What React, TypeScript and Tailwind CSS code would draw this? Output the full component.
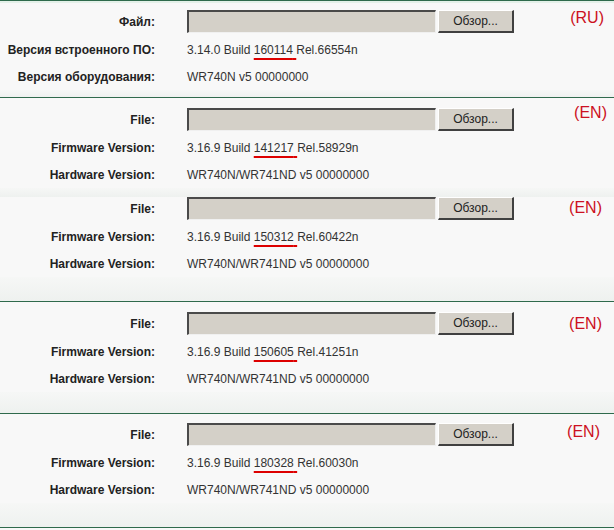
const FONT = { fontFamily: '"Liberation Sans", Arial, sans-serif' };

interface SectionProps {
  lang: string;
  labels: [string, string, string];
  version: string;
  build: string;
  rel: string;
  hardware: string;
  band: string;
  langPos: string;
  topLine?: boolean;
  bottomLine?: boolean;
  pt: string;
}

const Section = ({ lang, labels, version, build, rel, hardware, band, langPos, topLine, bottomLine, pt }: SectionProps) => (
  <div className="flex flex-col">
    {topLine && <div className="h-px bg-[#2f6a4c]" />}
    {topLine && <div className="h-[2px] bg-[#e4f1e9]" />}
    <div className={`relative flex flex-col ${pt}`}>
      <div className="flex h-[23px] items-center">
        <div className="w-[155px] pr-0 text-right text-[12px] font-bold text-[#222]">{labels[0]}</div>
        <div className="ml-[32px] flex h-[23px]">
          <div className="h-[23px] w-[249px] border-t-2 border-l-2 border-b border-r border-t-[#4a4a4a] border-l-[#4a4a4a] border-b-[#f0f0f0] border-r-[#f0f0f0] bg-[#d4d0c8]" />
          <button className="ml-[2px] h-[23px] w-[76px] border-t border-l border-b-2 border-r-2 border-t-white border-l-white border-b-[#404040] border-r-[#404040] bg-[#d4d0c8] text-[12px] text-[#222]">
            Обзор...
          </button>
        </div>
      </div>
      <div className={`absolute ${langPos} text-[16px] leading-none text-[#cc1122]`}>{lang}</div>
      <div className="mt-[3px] flex h-[27px] items-center text-[12px]">
        <div className="w-[155px] text-right font-bold text-[#222]">{labels[1]}</div>
        <div className="ml-[32px] text-[#333]">
          {version} Build{' '}
          <span className="underline decoration-[#dd0000] decoration-2 underline-offset-[4px]">{build} </span>
          {rel}
        </div>
      </div>
      <div className="flex h-[27px] items-center text-[12px]">
        <div className="w-[155px] text-right font-bold text-[#222]">{labels[2]}</div>
        <div className="ml-[32px] text-[#333]">{hardware}</div>
      </div>
    </div>
    <div className={`${band} bg-gradient-to-b from-[#f6f7f6] to-[#eef1ef]`} />
    {bottomLine && <div className="h-px bg-[#2f6a4c]" />}
  </div>
);

const EN: [string, string, string] = ['File:', 'Firmware Version:', 'Hardware Version:'];

export default function App() {
  return (
    <div className="h-[530px] w-[614px] overflow-hidden bg-[#f8f8f8]" style={FONT}>
      <Section
        topLine
        pt="pt-[7px]"
        lang="(RU)"
        langPos="right-[10px] top-[7px]"
        labels={['Файл:', 'Версия встроенного ПО:', 'Версия оборудования:']}
        version="3.14.0"
        build="160114"
        rel="Rel.66554n"
        hardware="WR740N v5 00000000"
        band="h-[7px]"
        bottomLine
      />
      <Section
        topLine={false}
        pt="pt-[10px]"
        lang="(EN)"
        langPos="right-[7px] top-[7px]"
        labels={EN}
        version="3.16.9"
        build="141217"
        rel="Rel.58929n"
        hardware="WR740N/WR741ND v5 00000000"
        band="h-[9px]"
      />
      <Section
        pt="pt-0"
        lang="(EN)"
        langPos="right-[12px] top-[3px]"
        labels={EN}
        version="3.16.9"
        build="150312"
        rel="Rel.60422n"
        hardware="WR740N/WR741ND v5 00000000"
        band="h-[24px]"
        bottomLine
      />
      <Section
        pt="pt-[10px]"
        lang="(EN)"
        langPos="right-[12px] top-[14px]"
        labels={EN}
        version="3.16.9"
        build="150605"
        rel="Rel.41251n"
        hardware="WR740N/WR741ND v5 00000000"
        band="h-[21px]"
        bottomLine
      />
      <Section
        pt="pt-[9px]"
        lang="(EN)"
        langPos="right-[14px] top-[10px]"
        labels={EN}
        version="3.16.9"
        build="180328"
        rel="Rel.60030n"
        hardware="WR740N/WR741ND v5 00000000"
        band="h-[24px]"
        bottomLine
      />
    </div>
  );
}
